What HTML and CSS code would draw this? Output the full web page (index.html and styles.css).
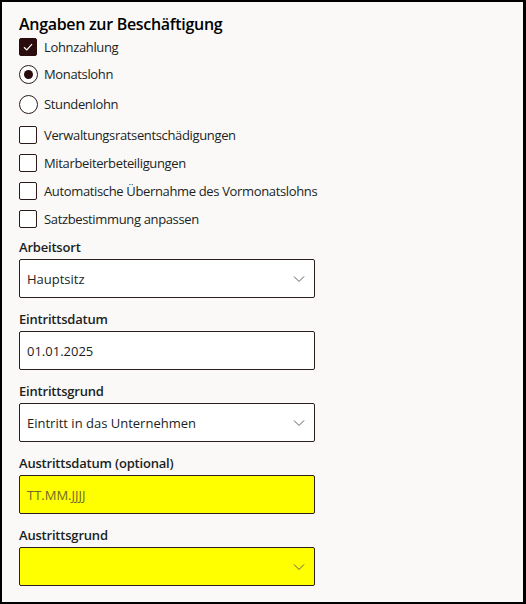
FILE: index.html
```html
<!DOCTYPE html>
<html>

<head>
    <meta name="viewport" content="width=device-width, initial-scale=1.0">
    <title>Angaben zur Beschäftigung</title>
    <link rel="stylesheet" href="styles.css">
</head>

<body>
    <div class="panel">
        <h2 class="title">Angaben zur Beschäftigung</h2>

        <!-- Lohnart -->
        <div class="group-pay">
            <label class="row">
                <span class="box checked">
                    <svg width="12" height="12" viewBox="0 0 12 12"><path d="M2 6.3 L4.8 9 L10 3.2" fill="none" stroke="#ffffff" stroke-width="1.2"/></svg>
                </span>
                <span>Lohnzahlung</span>
            </label>
            <label class="row">
                <span class="radio selected"></span>
                <span>Monatslohn</span>
            </label>
            <label class="row">
                <span class="radio"></span>
                <span>Stundenlohn</span>
            </label>
        </div>

        <!-- Optionen -->
        <div class="group-options">
            <label class="row"><span class="box"></span><span>Verwaltungsratsentschädigungen</span></label>
            <label class="row"><span class="box"></span><span>Mitarbeiterbeteiligungen</span></label>
            <label class="row"><span class="box"></span><span>Automatische Übernahme des Vormonatslohns</span></label>
            <label class="row"><span class="box"></span><span>Satzbestimmung anpassen</span></label>
        </div>

        <div class="fields">
            <div class="field">
                <div class="label">Arbeitsort</div>
                <div class="control">
                    <span>Hauptsitz</span>
                    <svg class="chevron" width="12" height="8" viewBox="0 0 12 8"><path d="M1 1.5 L6 6.5 L11 1.5" fill="none" stroke="#605e5c" stroke-width="1"/></svg>
                </div>
            </div>
            <div class="field">
                <div class="label">Eintrittsdatum</div>
                <div class="control"><span>01.01.2025</span></div>
            </div>
            <div class="field">
                <div class="label">Eintrittsgrund</div>
                <div class="control">
                    <span>Eintritt in das Unternehmen</span>
                    <svg class="chevron" width="12" height="8" viewBox="0 0 12 8"><path d="M1 1.5 L6 6.5 L11 1.5" fill="none" stroke="#605e5c" stroke-width="1"/></svg>
                </div>
            </div>
            <div class="field">
                <div class="label">Austrittsdatum (optional)</div>
                <div class="control missing"><span class="placeholder">TT.MM.JJJJ</span></div>
            </div>
            <div class="field">
                <div class="label">Austrittsgrund</div>
                <div class="control missing">
                    <span></span>
                    <svg class="chevron" width="12" height="8" viewBox="0 0 12 8"><path d="M1 1.5 L6 6.5 L11 1.5" fill="none" stroke="#605e5c" stroke-width="1"/></svg>
                </div>
            </div>
        </div>
    </div>
</body>

</html>
```

FILE: styles.css
```css
html,
body {
    margin: 0;
    height: 100%;
}

body {
    box-sizing: border-box;
    border: 2px solid #000000;
    border-right-width: 3px;
    background: #faf9f8;
    color: #201f1e;
    font-family: "Open Sans", "Noto Sans", sans-serif;
    font-size: 13px;
    letter-spacing: -0.35px;
}

/* Inhalt */
.panel {
    padding: 11px 0 0 17px;
}

.title {
    margin: 0;
    font-size: 16px;
    font-weight: 600;
    line-height: 22px;
    letter-spacing: -0.3px;
    color: #000000;
}

.row {
    display: flex;
    align-items: center;
    gap: 7px;
    height: 22px;
}

.group-pay {
    display: flex;
    flex-direction: column;
    margin-top: 1px;
}

.group-pay .row:nth-child(2) {
    margin-top: 5px;
}

.group-pay .row:nth-child(3) {
    margin-top: 8px;
}

.group-pay .row:nth-child(n+2) {
    gap: 6px;
}

.group-options {
    display: flex;
    flex-direction: column;
    gap: 6px;
    margin-top: 9px;
}

/* Kontrollkästchen */
.box {
    width: 18px;
    height: 18px;
    box-sizing: border-box;
    border: 1px solid #2b1a1a;
    border-radius: 2px;
    background: #ffffff;
    display: flex;
    align-items: center;
    justify-content: center;
}

.box.checked {
    background: #2a0c0c;
    border-color: #2a0c0c;
}

/* Optionsfelder */
.radio {
    width: 19px;
    height: 19px;
    box-sizing: border-box;
    border: 1px solid #2b1a1a;
    border-radius: 50%;
    background: #ffffff;
    display: flex;
    align-items: center;
    justify-content: center;
}

.radio.selected::after {
    content: "";
    width: 9px;
    height: 9px;
    border-radius: 50%;
    background: #2a0c0c;
}

/* Eingabefelder */
.fields {
    margin-top: 7px;
}

.field {
    width: 296px;
    margin-bottom: 11px;
}

.label {
    font-weight: 600;
    line-height: 20px;
    letter-spacing: -0.2px;
    margin-bottom: 2px;
}

.control {
    height: 39px;
    box-sizing: border-box;
    border: 1px solid #2b1f1f;
    border-radius: 2px;
    background: #ffffff;
    display: flex;
    align-items: center;
    justify-content: space-between;
    padding: 0 9px 0 7px;
    letter-spacing: 0;
}

.control.missing {
    background: #ffff00;
}

.placeholder {
    color: #6e6a2a;
}
```
